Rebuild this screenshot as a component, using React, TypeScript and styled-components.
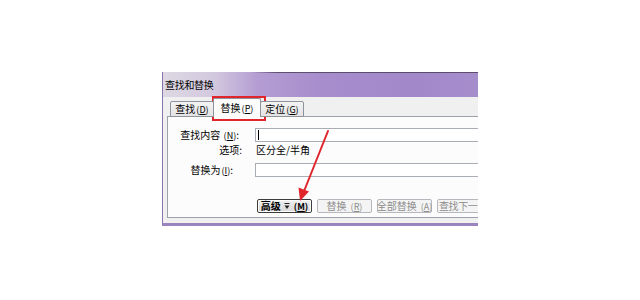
import React from "react";
import styled, { createGlobalStyle } from "styled-components";

const Global = createGlobalStyle`
  html, body { margin: 0; padding: 0; background: #ffffff; }
  body { font-family: "Noto Sans CJK SC", "Noto Sans", sans-serif; }
  * { box-sizing: border-box; }
`;

const Page = styled.div`
  position: relative;
  width: 640px;
  height: 300px;
  padding: 72px 0 0 162px;
  overflow: hidden;
`;

const Window = styled.div`
  width: 316px;
  height: 154px;
  display: flex;
  flex-direction: column;
  border-left: 1px solid #8a74ad;
  border-bottom: 3px solid #9a84bf;
  background: #f0f0f0;
  overflow: hidden;
  font-size: 10px;
  color: #000;
`;

const TitleBar = styled.div`
  height: 25px;
  flex: none;
  display: flex;
  align-items: center;
  padding: 0 0 0 2px;
  font-size: 10px;
  line-height: 1;
  letter-spacing: -0.3px;
  background:
    linear-gradient(to right, rgba(60, 50, 70, 0) 28%, rgba(60, 50, 70, 0.7) 36%, rgba(60, 50, 70, 0.7) 100%) top / 100% 1px no-repeat,
    linear-gradient(to right, #ddd8e3 0%, #d3c9df 16%, #b49dd3 30%, #a78dcc 50%, #a288c9 80%, #a68dcc 100%);
`;

const Body = styled.div`
  flex: 1;
  display: flex;
  flex-direction: column;
  padding: 1px 0 5px 4px;
`;

const TabRow = styled.div`
  display: flex;
  align-items: flex-end;
  height: 19px;
  padding-left: 3px;
  margin-bottom: -1px;
  position: relative;
  z-index: 1;
`;

const Tab = styled.div<{ $active?: boolean }>`
  height: ${(p) => (p.$active ? "19px" : "16px")};
  padding: 0 ${(p) => (p.$active ? "6px" : "4px")};
  margin: 0 ${(p) => (p.$active ? "-1px" : "0")};
  display: flex;
  align-items: center;
  justify-content: center;
  border: 1px solid #8f939b;
  border-bottom: ${(p) => (p.$active ? "none" : "1px solid #8f939b")};
  border-radius: 2px 2px 0 0;
  background: ${(p) =>
    p.$active ? "#fcfcfc" : "linear-gradient(#f3f3f3, #e4e4e4)"};
  font-size: 10px;
  line-height: 1;
  white-space: nowrap;
  width: ${(p) => (p.$active ? "48px" : "44px")};
  position: relative;
  z-index: ${(p) => (p.$active ? 2 : 1)};
`;

const Key = styled.span`
  font-size: 9px;
  margin-left: 1px;
  letter-spacing: 0;
`;

const U = styled.span`
  text-decoration: underline;
`;

const Panel = styled.div`
  flex: 1;
  display: flex;
  flex-direction: column;
  border: 1px solid #9da1a8;
  border-right: none;
  background: #fcfcfc;
`;

const FieldRow = styled.div<{ $mt: number }>`
  display: grid;
  grid-template-columns: 87px 1fr;
  height: 14px;
  margin-top: ${(p) => p.$mt}px;
  align-items: center;
`;

const Label = styled.div<{ $pr: number }>`
  text-align: right;
  padding-right: ${(p) => p.$pr}px;
  font-size: 10px;
  line-height: 1;
  white-space: nowrap;
`;

const Input = styled.div`
  height: 14px;
  border: 1px solid #a9adb4;
  border-right: none;
  background: #ffffff;
  display: flex;
  align-items: center;
  padding-left: 2px;
`;

const Caret = styled.div`
  width: 1px;
  height: 10px;
  background: #000;
`;

const OptionText = styled.div`
  font-size: 10px;
  line-height: 1;
  padding-left: 1px;
  white-space: nowrap;
`;

const ButtonRow = styled.div`
  display: flex;
  gap: 5px;
  margin-top: 22px;
  padding-left: 89px;
  height: 14px;
`;

const Button = styled.div<{ $disabled?: boolean; $default?: boolean; $start?: boolean }>`
  flex: none;
  width: 55px;
  height: 14px;
  display: flex;
  align-items: center;
  justify-content: ${(p) => (p.$start ? "flex-start" : "center")};
  padding-left: ${(p) => (p.$start ? "1px" : "0")};
  gap: 3px;
  font-size: 10px;
  line-height: 1;
  white-space: nowrap;
  letter-spacing: ${(p) => (p.$start ? "-0.4px" : "0")};
  border: 1px solid ${(p) => (p.$default ? "#3c3c3c" : "#b4b8bc")};
  border-radius: 2px;
  color: ${(p) => (p.$disabled ? "#8c8c8c" : "#000")};
  background: ${(p) =>
    p.$default ? "linear-gradient(#f0f0f0, #d8d8d8)" : "#f4f4f4"};
  box-shadow: ${(p) => (p.$default ? "inset 0 0 0 1px #ffffff" : "none")};
  font-weight: ${(p) => (p.$default ? 600 : 400)};
`;

const Overlay = styled.div`
  position: absolute;
  left: 0;
  top: 0;
  width: 640px;
  height: 300px;
  pointer-events: none;
`;

const RedBox = styled.div`
  position: absolute;
  left: 212px;
  top: 96px;
  width: 54px;
  height: 25px;
  border: 2px solid #e0262c;
`;

const ArrowSvg = styled.svg`
  position: absolute;
  left: 0;
  top: 0;
`;

const Caps = ({ k }: { k: string }) => (
  <Key>
    (<U>{k}</U>)
  </Key>
);

const ToggleGlyph = () => (
  <svg width="6" height="8" viewBox="0 0 6 8">
    <line x1="0.5" y1="1.5" x2="5.5" y2="1.5" stroke="#222" strokeWidth="1" />
    <polygon points="0.5,3.5 5.5,3.5 3,7" fill="#222" />
  </svg>
);

export default function App() {
  return (
    <>
      <Global />
      <Page>
        <Window>
          <TitleBar>查找和替换</TitleBar>
          <Body>
            <TabRow>
              <Tab>
                查找<Caps k="D" />
              </Tab>
              <Tab $active>
                替换<Caps k="P" />
              </Tab>
              <Tab>
                定位<Caps k="G" />
              </Tab>
            </TabRow>
            <Panel>
              <FieldRow $mt={11}>
                <Label $pr={16}>
                  查找内容 <Caps k="N" />:
                </Label>
                <Input>
                  <Caret />
                </Input>
              </FieldRow>
              <FieldRow $mt={1}>
                <Label $pr={13}>选项:</Label>
                <OptionText>区分全/半角</OptionText>
              </FieldRow>
              <FieldRow $mt={6}>
                <Label $pr={22}>
                  替换为<Caps k="I" />:
                </Label>
                <Input />
              </FieldRow>
              <ButtonRow>
                <Button $default>
                  <span>高级</span>
                  <ToggleGlyph />
                  <Caps k="M" />
                </Button>
                <Button $disabled>
                  替换 <Caps k="R" />
                </Button>
                <Button $disabled>
                  全部替换<Caps k="A" />
                </Button>
                <Button $disabled $start>
                  查找下一
                </Button>
              </ButtonRow>
            </Panel>
          </Body>
        </Window>
        <Overlay>
          <RedBox />
          <ArrowSvg width="640" height="300" viewBox="0 0 640 300">
            <line x1="328" y1="131" x2="304.5" y2="190" stroke="#e0262c" strokeWidth="2" strokeLinecap="round" />
            <polygon points="300,201 298.5,187.5 309,191.5" fill="#e0262c" />
          </ArrowSvg>
        </Overlay>
      </Page>
    </>
  );
}
